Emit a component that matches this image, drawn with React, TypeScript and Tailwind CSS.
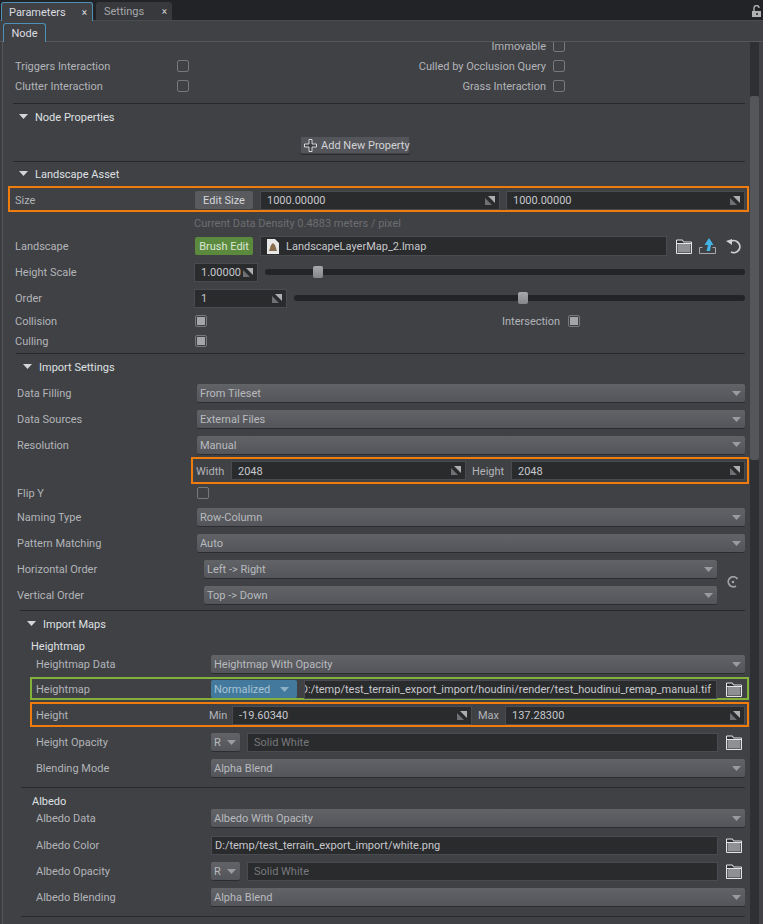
import React from "react";

const Caret = ({ className = "" }: { className?: string }) => (
  <svg width="9" height="5" viewBox="0 0 9 5" className={`shrink-0 ${className}`}>
    <path d="M0 0h9L4.5 5z" fill="currentColor" />
  </svg>
);

const Spin = () => (
  <svg width="10" height="9" viewBox="0 0 10 9" className="shrink-0">
    <path d="M0 2v7h7z" fill="#6f7073" />
    <path d="M3 0h7v7z" fill="#adaeb0" />
  </svg>
);

const Folder = () => (
  <svg width="16" height="15" viewBox="0 0 16 15" className="shrink-0">
    <path d="M.5 1h6l1 2h8v11.5H.5z" fill="#2f3033" stroke="#e4e4e4" />
    <path d="M1.500 5h13v8.500h-13z" fill="#8f9093" />
    <path d="M1 4.500h14" stroke="#e4e4e4" />
  </svg>
);

const Check = ({ on = false, className = "" }: { on?: boolean; className?: string }) => (
  <div className={`w-3 h-3 shrink-0 rounded-[2px] border border-[#77787c] flex items-center justify-center ${className}`}>
    {on && <div className="w-[8px] h-[8px] bg-[#a4a5a8]" />}
  </div>
);

const Input = ({ value, spin, className = "", muted }: { value: string; spin?: boolean; className?: string; muted?: boolean }) => (
  <div className={`h-[19px] bg-[#2a2b2d] border border-[#4a4b50] flex items-center pl-[6px] pr-[4px] overflow-hidden ${className}`}>
    <span className={`flex-1 min-w-0 overflow-hidden pt-[2px] ${muted ? "text-[#77787c]" : "text-[#c6c8cc]"}`}>{value}</span>
    {spin && <Spin />}
  </div>
);

const Select = ({ value, className = "", blue }: { value: string; className?: string; blue?: boolean }) => (
  <div
    className={`h-[18px] rounded-[2px] flex items-center justify-between pl-[3px] pr-[3px] ${
      blue
        ? "bg-[#42799c] text-[#a8c4d6]"
        : "bg-gradient-to-b from-[#626367] to-[#54555a] text-[#b8babe] shadow-[0_1px_0_#2c2d30]"
    } ${className}`}
  >
    <span className="pt-[2px]">{value}</span>
    <Caret className={blue ? "text-[#8db0c6] mr-[5px]" : "text-[#9a9b9e] mr-[1px]"} />
  </div>
);

const Slider = ({ thumb, className = "" }: { thumb: string; className?: string }) => (
  <div className={`relative h-[6px] rounded-full bg-[#232426] ${className}`}>
    <div className={`absolute -top-[3px] w-[10px] h-[12px] rounded-[2px] bg-gradient-to-b from-[#a8a9ab] to-[#85868a] ${thumb}`} />
  </div>
);

const Divider = ({ className = "" }: { className?: string }) => <div className={`h-px bg-[#27282a] shrink-0 ${className}`} />;

const Header = ({ title, className = "" }: { title: string; className?: string }) => (
  <div className={`flex items-center text-[#dfe0e2] shrink-0 ${className}`}>
    <Caret className="text-[#d4d5d7] mr-[7px] -mt-[2px]" />
    <span className="pt-[2px]">{title}</span>
  </div>
);

const Row = ({ label, pad, w, h = "h-[26px]", children, className = "" }: { label: string; pad: string; w: string; h?: string; children?: React.ReactNode; className?: string }) => (
  <div className={`flex items-center pr-[5px] shrink-0 ${h} ${pad} ${className}`}>
    <div className={`shrink-0 pt-[2px] ${w}`}>{label}</div>
    {children}
  </div>
);

export default function App() {
  return (
    <div
      className="w-[763px] h-[924px] overflow-hidden flex flex-col bg-[#404145] text-[11px] leading-[14px] whitespace-nowrap text-[#b2b4b8]"
      style={{ fontFamily: 'Roboto, sans-serif' }}
    >
      {/* dock tabs */}
      <div className="h-[21px] shrink-0 bg-[#222326] border-b border-[#4a4b4f] flex items-end pl-px gap-[3px] relative">
        <div className="w-[92px] h-[19px] -mb-px bg-[#404145] border-t border-l border-r border-[#4d90b8] rounded-t-[3px] flex items-center pl-[7px] pr-[5px] justify-between text-[#dcdde0]">
          <span className="pt-[2px]">Parameters</span>
          <span className="text-[10px] pt-[2px]">×</span>
        </div>
        <div className="w-[76px] h-[18px] bg-[#38393c] rounded-t-[3px] flex items-center pl-[8px] pr-[5px] justify-between text-[#a6a8ac]">
          <span className="pt-[2px]">Settings</span>
          <span className="text-[10px] text-[#d0d0d0] pt-[2px]">×</span>
        </div>
        <svg width="10" height="13" viewBox="0 0 10 13" className="absolute right-[1px] top-[5px]">
          <path d="M2 6V3a2.500 2.500 0 0 1 5 0" fill="none" stroke="#b0b1b3" strokeWidth="1.400" />
          <path d="M0 6h9v6H0z" fill="#b0b1b3" />
          <path d="M4 8h2v2H4z" fill="#444" />
        </svg>
      </div>
      {/* inner tab */}
      <div className="h-[21px] shrink-0 border-b border-[#56575b] flex items-end pl-[3px]">
        <div className="w-[43px] h-[19px] -mb-px bg-[#404145] border-t border-l border-r border-[#4d90b8] rounded-t-[3px] flex items-center justify-center text-[#dcdde0]">
          <span className="pt-[2px]">Node</span>
        </div>
      </div>

      <div className="flex-1 min-h-0 flex">
        <div className="w-[3px] shrink-0 border-r border-[#55565a] bg-[#3c3d41]" />
        <div className="w-[747px] shrink-0 overflow-hidden">
          <div className="-mt-[6px] flex flex-col">
            <div className="h-5 flex items-center justify-end pr-[185px] gap-[7px]">
              <span className="pt-[2px]">Immovable</span>
              <Check />
            </div>
            <div className="h-5 flex items-center pl-[12px] pr-[185px]">
              <span className="w-[162px] pt-[2px]">Triggers Interaction</span>
              <Check />
              <span className="ml-auto mr-[7px] pt-[2px]">Culled by Occlusion Query</span>
              <Check />
            </div>
            <div className="h-5 flex items-center pl-[12px] pr-[185px]">
              <span className="w-[162px] pt-[2px]">Clutter Interaction</span>
              <Check />
              <span className="ml-auto mr-[7px] pt-[2px]">Grass Interaction</span>
              <Check />
            </div>
            <Divider className="mt-[7px] ml-[10px] mr-[5px]" />
            <Header title="Node Properties" className="h-[26px] pl-[16px]" />
            <div className="h-[31px] shrink-0 pt-[6px] pl-[297px]">
              <div className="w-[110px] h-[18px] rounded-[2px] bg-[#54555a] border border-[#404145] shadow-[0_1px_0_#2c2d30] flex items-center pl-[3px] gap-[4px] text-[#d2d3d6]">
                <svg width="13" height="13" viewBox="0 0 13 13" className="shrink-0">
                  <path d="M5 .5h3v4.500h4.500v3H8v4.500H5V8H.5V5H5z" fill="#3c3d40" stroke="#d8d9db" />
                </svg>
                <span className="pt-[2px]">Add New Property</span>
              </div>
            </div>
            <Divider className="ml-[10px] mr-[5px]" />
            <Header title="Landscape Asset" className="h-[24px] pl-[16px]" />

            <div className="h-[26px] shrink-0 ml-[5px] w-[741px] border-2 border-[#f07c0e] flex items-center pl-[5px] pr-[2px] pt-[2px]">
              <span className="w-[180px] shrink-0 pt-[2px]">Size</span>
              <div className="w-[58px] h-[18px] shrink-0 rounded-[2px] bg-[#595a5e] text-[#d6d7da] flex items-center justify-center pt-px">Edit Size</div>
              <Input value="1000.00000" spin className="ml-[7px] w-[240px] shrink-0" />
              <Input value="1000.00000" spin className="ml-[6px] w-[239px] shrink-0" />
            </div>

            <div className="h-[21px] shrink-0 pl-[191px] flex items-center text-[#6c6d71] pt-[2px]">Current Data Density 0.4883 meters / pixel</div>

            <Row label="Landscape" pad="pl-[12px]" w="w-[180px]">
              <div className="w-[58px] h-[18px] shrink-0 rounded-[2px] bg-[#5b8a3e] text-[#dce6d4] flex items-center justify-center pt-px">Brush Edit</div>
              <div className="ml-[7px] w-[407px] h-[20px] shrink-0 bg-[#2a2b2d] border border-[#4a4b50] flex items-center pl-[6px] gap-[7px] text-[#c6c8cc]">
                <svg width="12" height="15" viewBox="0 0 12 15" className="shrink-0">
                  <path d="M0 0h8l4 4v11H0z" fill="#e8e8e8" />
                  <path d="M2 12l2-6 2-2 2 2 2 6z" fill="#8a6f4e" />
                </svg>
                <span className="pt-[2px]">LandscapeLayerMap_2.lmap</span>
              </div>
              <div className="ml-[9px] shrink-0"><Folder /></div>
              <svg width="17" height="16" viewBox="0 0 17 16" className="ml-[7px] shrink-0">
                <path d="M3.500 9.500H.5v6h16v-6h-3" fill="none" stroke="#a6a7aa" />
                <path d="M10 0L5.500 7H9L7.500 13H11l1-6h2.500z" fill="#42b4e6" />
              </svg>
              <svg width="16" height="15" viewBox="0 0 16 15" className="ml-[10px] shrink-0">
                <path d="M3.500 3.500A6 6 0 1 1 5 13" fill="none" stroke="#cfd0d2" strokeWidth="1.800" />
                <path d="M0 2l6-2v6z" fill="#cfd0d2" />
              </svg>
            </Row>
            <Row label="Height Scale" pad="pl-[12px]" w="w-[179px]">
              <Input value="1.00000" spin className="w-[64px] shrink-0" />
              <Slider thumb="left-[48px]" className="ml-[7px] flex-1" />
            </Row>
            <Row label="Order" pad="pl-[12px]" w="w-[179px]">
              <Input value="1" spin className="w-[93px] shrink-0" />
              <Slider thumb="left-[224px]" className="ml-[7px] flex-1" />
            </Row>
            <Row label="Collision" pad="pl-[12px]" w="w-[180px]" h="h-[20px]">
              <Check on />
              <span className="ml-[295px] pt-[2px]">Intersection</span>
              <Check on className="ml-[8px]" />
            </Row>
            <Row label="Culling" pad="pl-[12px]" w="w-[180px]" h="h-[20px]">
              <Check on />
            </Row>
            <Divider className="mt-[2px] ml-[13px] mr-[5px]" />

            <Header title="Import Settings" className="h-[26px] pl-[20px]" />
            <Row label="Data Filling" pad="pl-[14px]" w="w-[180px]"><Select value="From Tileset" className="flex-1" /></Row>
            <Row label="Data Sources" pad="pl-[14px]" w="w-[180px]"><Select value="External Files" className="flex-1" /></Row>
            <Row label="Resolution" pad="pl-[14px]" w="w-[180px]" h="h-[25px]"><Select value="Manual" className="flex-1" /></Row>

            <div className="h-[27px] shrink-0 ml-[188px] w-[558px] border-2 border-[#f07c0e] flex items-center pl-[3px] pr-[1px]">
              <span className="w-[35px] shrink-0 pt-[2px]">Width</span>
              <Input value="2048" spin className="w-[235px] shrink-0" />
              <span className="ml-[6px] w-[39px] shrink-0 pt-[2px]">Height</span>
              <Input value="2048" spin className="w-[234px] shrink-0" />
            </div>

            <Row label="Flip Y" pad="pl-[14px]" w="w-[180px]" h="h-[18px]"><Check /></Row>
            <Row label="Naming Type" pad="pl-[14px]" w="w-[180px]" h="h-[28px]" className="pt-[2px]"><Select value="Row-Column" className="flex-1" /></Row>
            <Row label="Pattern Matching" pad="pl-[14px]" w="w-[180px]"><Select value="Auto" className="flex-1" /></Row>
            <div className="flex pr-[5px]">
              <div className="w-[714px] shrink-0">
                <Row label="Horizontal Order" pad="pl-[14px]" w="w-[187px]" className="!pr-0"><Select value="Left -> Right" className="flex-1" /></Row>
                <Row label="Vertical Order" pad="pl-[14px]" w="w-[187px]" className="!pr-0"><Select value="Top -> Down" className="flex-1" /></Row>
              </div>
              <div className="flex-1 flex items-center justify-center">
                <svg width="12" height="12" viewBox="0 0 12 12" className="ml-[4px]">
                  <path d="M10.500 3A5 5 0 1 0 9 10" fill="none" stroke="#a0a1a4" strokeWidth="1.800" />
                  <circle cx="6" cy="6" r="1.300" fill="#a0a1a4" />
                </svg>
              </div>
            </div>
            <Divider className="mt-[2px] ml-[17px] mr-[5px]" />

            <Header title="Import Maps" className="h-[26px] pl-[24px]" />
            <div className="h-[18px] shrink-0 pl-[28px] flex items-center text-[#dfe0e2] pt-[2px]">Heightmap</div>
            <Row label="Heightmap Data" pad="pl-[33px]" w="w-[175px]" h="h-[18px]" className="mb-[4px]"><Select value="Heightmap With Opacity" className="flex-1" /></Row>

            <div className="h-[23px] shrink-0 ml-[27px] w-[719px] border-2 border-[#84b13c] flex items-center pl-[4px] pr-[7px] pt-px">
              <span className="w-[175px] shrink-0 pt-[2px]">Heightmap</span>
              <Select value="Normalized" blue className="w-[86px] shrink-0" />
              <div className="ml-[7px] w-[413px] h-[19px] shrink-0 bg-[#2a2b2d] border border-[#4a4b50] flex items-center justify-end pr-[5px] overflow-hidden text-[#c6c8cc]">
                <span className="pt-[2px] shrink-0">D:/temp/test_terrain_export_import/houdini/render/test_houdinui_remap_manual.tif</span>
              </div>
              <div className="ml-[9px] shrink-0"><Folder /></div>
            </div>

            <div className="h-[25px] mt-[2px] shrink-0 ml-[27px] w-[719px] border-2 border-[#f07c0e] flex items-center pl-[4px] pr-[1px] pt-px">
              <span className="w-[173px] shrink-0 pt-[2px]">Height</span>
              <span className="w-[23px] shrink-0 pt-[2px]">Min</span>
              <Input value="-19.60340" spin className="w-[240px] shrink-0" />
              <span className="ml-[6px] w-[27px] shrink-0 pt-[2px]">Max</span>
              <Input value="137.28300" spin className="w-[240px] shrink-0" />
            </div>

            <Row label="Height Opacity" pad="pl-[33px]" w="w-[175px]" className="mt-[2px]">
              <Select value="R" className="w-[29px] shrink-0" />
              <Input value="Solid White" muted className="ml-[7px] w-[471px] shrink-0" />
              <div className="ml-[8px] shrink-0"><Folder /></div>
            </Row>
            <Row label="Blending Mode" pad="pl-[33px]" w="w-[175px]"><Select value="Alpha Blend" className="flex-1" /></Row>
            <Divider className="mt-[6px] ml-[18px] mr-[5px]" />

            <div className="h-[16px] mt-[5px] shrink-0 pl-[29px] flex items-center text-[#dfe0e2] pt-[2px]">Albedo</div>
            <Row label="Albedo Data" pad="pl-[33px]" w="w-[175px]" h="h-[18px]" className="mb-[5px]"><Select value="Albedo With Opacity" className="flex-1" /></Row>
            <Row label="Albedo Color" pad="pl-[33px]" w="w-[175px]">
              <Input value="D:/temp/test_terrain_export_import/white.png" className="w-[507px] shrink-0 !pl-[3px]" />
              <div className="ml-[8px] shrink-0"><Folder /></div>
            </Row>
            <Row label="Albedo Opacity" pad="pl-[33px]" w="w-[175px]">
              <Select value="R" className="w-[29px] shrink-0" />
              <Input value="Solid White" muted className="ml-[7px] w-[471px] shrink-0" />
              <div className="ml-[8px] shrink-0"><Folder /></div>
            </Row>
            <Row label="Albedo Blending" pad="pl-[33px]" w="w-[175px]"><Select value="Alpha Blend" className="flex-1" /></Row>
            <Divider className="mt-[6px] ml-[18px] mr-[5px]" />
          </div>
        </div>
        <div className="w-[9px] shrink-0 bg-[#2f3033] flex flex-col">
          <div className="h-[54px] shrink-0" />
          <div className="h-[364px] shrink-0 bg-[#55565a] rounded-[2px]" />
        </div>
      </div>
    </div>
  );
}
